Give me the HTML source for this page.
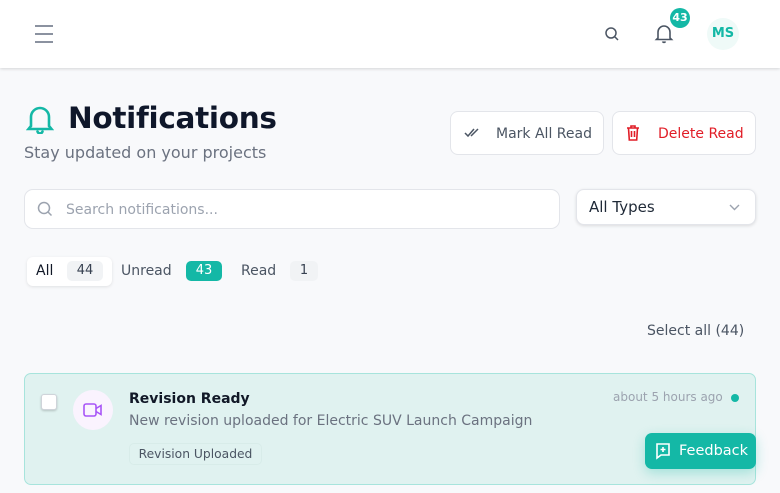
<!DOCTYPE html>
<html><head><meta charset="utf-8"><style>
*{box-sizing:border-box;margin:0;padding:0}
body{width:780px;height:493px;overflow:hidden;background:#f8f9fb;font-family:"DejaVu Sans","Liberation Sans",sans-serif;position:relative}
.a{position:absolute}
.hdr{left:0;top:0;width:780px;height:68px;background:#fff;box-shadow:0 1px 3px rgba(0,0,0,.15)}
.btn{background:#fff;border:1px solid #e3e5ea;border-radius:8px;font-size:14px;display:flex;align-items:center}
</style></head><body>
<div class="a hdr">
 <svg class="a" style="left:34px;top:24px" width="20" height="20" viewBox="0 0 20 20" fill="none" stroke="#8b92a0" stroke-width="2"><path d="M1 2h18M1 10h18M1 18h18"/></svg>
 <svg class="a" style="left:604px;top:26px" width="16" height="16" viewBox="0 0 16 16" fill="none" stroke="#4b5563" stroke-width="1.5"><circle cx="7" cy="7" r="5"/><path d="M11 11l3 3"/></svg>
 <svg class="a" style="left:654px;top:23px" width="20" height="21" viewBox="0 0 20 21" fill="none" stroke="#4b5563" stroke-width="1.6"><path d="M4 15V9a6 6 0 0 1 12 0v6l1.5 1.5h-15z"/><path d="M8.5 18.5a1.7 1.7 0 0 0 3 0"/></svg>
 <div class="a" style="left:670px;top:8px;width:20px;height:20px;border-radius:10px;background:#14b8a6;color:#fff;font-size:11px;font-weight:bold;text-align:center;line-height:20px">43</div>
 <div class="a" style="left:707px;top:18px;width:32px;height:32px;border-radius:16px;background:#effaf8;color:#14b8a6;font-size:13px;font-weight:bold;text-align:center;line-height:32px">MS</div>
</div>
<svg class="a" style="left:26px;top:104px" width="28" height="30" viewBox="0 0 28 30" fill="none" stroke="#14b8a6" stroke-width="2.6" stroke-linecap="round"><path d="M5 22V13a9 9 0 0 1 18 0v9l2.5 3h-23z"/><path d="M11.5 27.5a2.6 2.6 0 0 0 5 0"/></svg>
<div class="a" style="left:68px;top:101px;font-size:29.5px;font-weight:bold;color:#0f172a;letter-spacing:-0.3px">Notifications</div>
<div class="a" style="left:24px;top:143px;font-size:16px;color:#6b7280">Stay updated on your projects</div>
<div class="a btn" style="left:450px;top:111px;width:154px;height:44px;color:#4b5563">
 <svg style="margin-left:13px" width="16" height="12" viewBox="0 0 16 12" fill="none" stroke="#4b5563" stroke-width="1.5"><path d="M1 6l3 3 6-7M7 9l0 0 7-7"/></svg>
 <span style="margin-left:16px;padding-top:2px">Mark All Read</span></div>
<div class="a btn" style="left:612px;top:111px;width:144px;height:44px;color:#e11d27">
 <svg style="margin-left:13px" width="14" height="16" viewBox="0 0 14 16" fill="none" stroke="#e11d27" stroke-width="1.6"><path d="M1 3h12M5 3V1h4v2M2.5 3l.8 12h7.4l.8-12M5.5 6v6M8.5 6v6"/></svg>
 <span style="margin-left:18px;padding-top:2px">Delete Read</span></div>
<div class="a btn" style="left:24px;top:189px;width:536px;height:40px;color:#9ca3af;border-radius:9px">
 <svg style="margin-left:12px" width="16" height="16" viewBox="0 0 16 16" fill="none" stroke="#9ca3af" stroke-width="1.5"><circle cx="7" cy="7" r="5.5"/><path d="M11 11l3.5 3.5"/></svg>
 <span style="margin-left:13px;font-size:14px;padding-top:2px">Search notifications...</span></div>
<div class="a btn" style="left:576px;top:189px;width:180px;height:36px;color:#1f2937;box-shadow:0 1px 3px rgba(0,0,0,.12);font-size:15px">
 <span style="margin-left:12px">All Types</span>
 <svg style="position:absolute;right:15px" width="11" height="7" viewBox="0 0 11 7" fill="none" stroke="#9ca3af" stroke-width="1.4"><path d="M1 1l4.5 4.5L10 1"/></svg></div>
<div class="a" style="left:27px;top:257px;width:85px;height:29px;background:#fff;border-radius:6px;box-shadow:0 1px 3px rgba(0,0,0,.1)"></div>
<div class="a" style="left:36px;top:263px;font-size:14px;color:#111827">All</div>
<div class="a" style="left:67px;top:261px;width:36px;height:20px;background:#f1f3f5;border-radius:5px;font-size:13px;color:#374151;text-align:center;line-height:20px">44</div>
<div class="a" style="left:121px;top:263px;font-size:14px;color:#4b5563">Unread</div>
<div class="a" style="left:186px;top:261px;width:36px;height:20px;background:#14b8a6;border-radius:5px;font-size:13px;color:#fff;text-align:center;line-height:20px">43</div>
<div class="a" style="left:241px;top:263px;font-size:14px;color:#4b5563">Read</div>
<div class="a" style="left:290px;top:261px;width:28px;height:20px;background:#f1f3f5;border-radius:5px;font-size:13px;color:#374151;text-align:center;line-height:20px">1</div>
<div class="a" style="left:647px;top:323px;font-size:14px;color:#4b5563">Select all (44)</div>
<div class="a" style="left:24px;top:373px;width:732px;height:112px;background:#e0f2f0;border:1px solid #a7e4dc;border-radius:7px"></div>
<div class="a" style="left:41px;top:394px;width:16px;height:16px;background:#fff;border:1px solid #cfd4da;border-radius:3px;box-shadow:0 1px 2px rgba(0,0,0,.2)"></div>
<div class="a" style="left:73px;top:390px;width:40px;height:40px;border-radius:20px;background:#faf3fe"></div>
<svg class="a" style="left:83px;top:402px" width="20" height="16" viewBox="0 0 20 16" fill="none" stroke="#a855f7" stroke-width="1.6"><rect x="1" y="2" width="12" height="12" rx="2"/><path d="M13 6.5l5-3v9l-5-3"/></svg>
<div class="a" style="left:129px;top:391px;font-size:14px;font-weight:bold;color:#111827">Revision Ready</div>
<div class="a" style="left:129px;top:413px;font-size:14px;color:#6b7280">New revision uploaded for Electric SUV Launch Campaign</div>
<div class="a" style="left:129px;top:443px;width:133px;height:22px;border:1px solid #d8ece9;border-radius:5px;font-size:12.3px;color:#4b5563;text-align:center;line-height:21px">Revision Uploaded</div>
<div class="a" style="left:613px;top:390px;font-size:12px;color:#9ca3af">about 5 hours ago</div>
<div class="a" style="left:731px;top:394px;width:8px;height:8px;border-radius:4px;background:#14b8a6"></div>
<div class="a" style="left:645px;top:433px;width:111px;height:36px;background:#14b8a6;border-radius:7px;box-shadow:0 4px 12px rgba(20,184,166,.3);color:#fff;font-size:14.5px;display:flex;align-items:center">
 <svg style="margin-left:10px" width="16" height="18" viewBox="0 0 16 18" fill="none" stroke="#fff" stroke-width="1.6"><path d="M2 2h12v11H6l-4 3z"/><path d="M8 5v5M5.5 7.5h5"/></svg>
 <span style="margin-left:8px">Feedback</span></div>
</body></html>
